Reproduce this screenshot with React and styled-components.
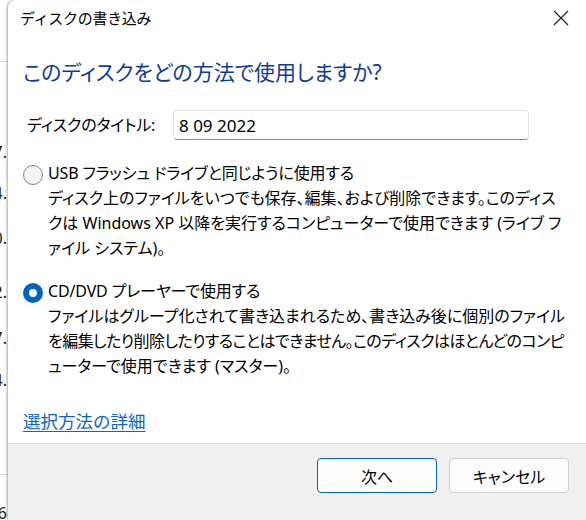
import React from "react";
import styled, { createGlobalStyle } from "styled-components";

const Global = createGlobalStyle`
  html, body { margin: 0; padding: 0; background: #ffffff; }
  body {
    font-family: "Noto Sans", "Noto Sans CJK JP", sans-serif;
    color: #000;
    -webkit-font-smoothing: antialiased;
  }
  #root { width: 586px; height: 520px; overflow: hidden; }
`;

const Screen = styled.div`
  display: flex;
  width: 586px;
  height: 520px;
  overflow: hidden;
  background: #ffffff;
`;

const BackStrip = styled.div`
  width: 8px;
  flex: none;
  display: flex;
  flex-direction: column;
  overflow: hidden;
  background: #ffffff;
`;

const BackLine = styled.div`
  flex: none;
  height: 1px;
  width: 100%;
  margin-top: ${(p) => p.$top}px;
  background: #d6d6d6;
`;

const BackDigit = styled.div`
  flex: none;
  height: 20px;
  margin-top: ${(p) => p.$top}px;
  display: flex;
  justify-content: flex-end;
  align-items: center;
  white-space: nowrap;
  font-family: "Noto Sans", sans-serif;
  font-size: 16px;
  line-height: 20px;
  color: #1a1a1a;
  padding-right: 1px;
`;

const Dialog = styled.div`
  position: relative;
  flex: 1;
  min-width: 0;
  display: flex;
  flex-direction: column;
  background: #ffffff;
  border-top-left-radius: 8px;
  box-shadow: -1px 0 3px rgba(0, 0, 0, 0.35);
`;

const TitleBar = styled.div`
  height: 36px;
  flex: none;
  display: flex;
  align-items: center;
  justify-content: space-between;
  padding-left: 12px;
`;

const TitleText = styled.div`
  font-family: "Noto Sans CJK JP", sans-serif;
  font-size: 15px;
  letter-spacing: -0.3px;
  line-height: 20px;
  color: #000;
`;

const CloseButton = styled.div`
  width: 46px;
  height: 36px;
  margin-right: 2px;
  display: flex;
  align-items: center;
  justify-content: center;
`;

const Content = styled.div`
  flex: 1;
  display: flex;
  flex-direction: column;
  padding: 0 15px;
`;

const Heading = styled.div`
  margin-top: 22px;
  font-family: "Noto Sans", "Noto Sans CJK JP", sans-serif;
  font-feature-settings: "palt";
  font-size: 21px;
  line-height: 28px;
  color: #0f3aa0;
  white-space: nowrap;
`;

const TitleRow = styled.div`
  margin-top: 24px;
  height: 30px;
  display: flex;
  align-items: center;
  padding-left: 4px;
`;

const FieldLabel = styled.div`
  width: 146px;
  flex: none;
  font-feature-settings: "palt";
  font-size: 16px;
  letter-spacing: -0.2px;
  line-height: 25px;
  white-space: nowrap;
`;

const TextBox = styled.div`
  box-sizing: border-box;
  width: 356px;
  height: 30px;
  border: 1px solid #e3e3e3;
  border-bottom-color: #8a8a8a;
  border-radius: 4px;
  padding: 0 5px;
  display: flex;
  align-items: center;
  font-size: 17px;
  background: #fff;
`;

const Option = styled.div`
  margin-top: ${(p) => p.$top}px;
  display: grid;
  grid-template-columns: 20px 1fr;
  column-gap: 5px;
  line-height: 25px;
  font-size: 16px;
  font-feature-settings: "palt";
`;

const RadioCell = styled.div`
  height: 25px;
  display: flex;
  align-items: center;
  padding-top: 2px;
  box-sizing: border-box;
`;

const Radio = styled.div`
  box-sizing: border-box;
  width: 20px;
  height: 20px;
  border-radius: 50%;
  ${(p) =>
    p.$checked
      ? `background: #ffffff; border: 6px solid #0063be;`
      : `background: #f3f3f3; border: 1px solid #858585;`}
`;

const OptionTitle = styled.div`
  white-space: nowrap;
  letter-spacing: -0.15px;
`;

const OptionDesc = styled.div`
  grid-column: 2;
  display: flex;
  flex-direction: column;
`;

const DescLine = styled.div`
  white-space: nowrap;
  letter-spacing: ${(p) => p.$ls || 0}px;
`;

const HelpLink = styled.a`
  margin-top: 30px;
  align-self: flex-start;
  font-size: 17.5px;
  line-height: 25px;
  color: #0a66c8;
  text-decoration: underline;
  text-underline-offset: 3px;
  cursor: pointer;
`;

const Footer = styled.div`
  flex: none;
  height: 62px;
  border-top: 1px solid #dedede;
  background: #f0f0f0;
  display: flex;
  justify-content: flex-end;
  align-items: flex-start;
  gap: 12px;
  padding: 14px 17px 0 0;
`;

const Button = styled.div`
  box-sizing: border-box;
  width: 120px;
  height: 35px;
  border-radius: 4px;
  background: #fdfdfd;
  border: 1px solid ${(p) => (p.$primary ? "#0067c0" : "#d0d0d0")};
  display: flex;
  align-items: center;
  justify-content: center;
  font-size: 16px;
  font-feature-settings: "palt";
  color: #000;
`;

const backDigits = [
  { t: "17.", top: 80 },
  { t: "14.", top: 21 },
  { t: "10.", top: 25 },
  { t: "12.", top: 34 },
  { t: "17.", top: 26 },
  { t: "14.", top: 22 },
];

export default function App() {
  return (
    <>
      <Global />
      <Screen>
        <BackStrip>
          <BackLine $top={61} />
          {backDigits.map((d, i) => (
            <BackDigit key={i} $top={d.top}>
              {d.t}
            </BackDigit>
          ))}
          <BackLine $top={84} />
          <BackDigit $top={28}>6</BackDigit>
        </BackStrip>
        <Dialog>
          <TitleBar>
            <TitleText>ディスクの書き込み</TitleText>
            <CloseButton>
              <svg width="16" height="16" viewBox="0 0 16 16">
                <path d="M1 1 L15 15 M15 1 L1 15" stroke="#1a1a1a" strokeWidth="1.1" fill="none" />
              </svg>
            </CloseButton>
          </TitleBar>
          <Content>
            <Heading>このディスクをどの方法で使用しますか?</Heading>
            <TitleRow>
              <FieldLabel>ディスクのタイトル:</FieldLabel>
              <TextBox>8 09 2022</TextBox>
            </TitleRow>
            <Option $top={21}>
              <RadioCell>
                <Radio />
              </RadioCell>
              <OptionTitle>USB フラッシュ ドライブと同じように使用する</OptionTitle>
              <OptionDesc>
                <DescLine>ディスク上のファイルをいつでも保存、編集、および削除できます。このディス</DescLine>
                <DescLine>クは Windows XP 以降を実行するコンピューターで使用できます (ライブ フ</DescLine>
                <DescLine>ァイル システム)。</DescLine>
              </OptionDesc>
            </Option>
            <Option $top={18}>
              <RadioCell>
                <Radio $checked />
              </RadioCell>
              <OptionTitle>CD/DVD プレーヤーで使用する</OptionTitle>
              <OptionDesc>
                <DescLine>ファイルはグループ化されて書き込まれるため、書き込み後に個別のファイル</DescLine>
                <DescLine $ls={-0.55}>を編集したり削除したりすることはできません。このディスクはほとんどのコンピ</DescLine>
                <DescLine>ューターで使用できます (マスター)。</DescLine>
              </OptionDesc>
            </Option>
            <HelpLink>選択方法の詳細</HelpLink>
          </Content>
          <Footer>
            <Button $primary>次へ</Button>
            <Button>キャンセル</Button>
          </Footer>
        </Dialog>
      </Screen>
    </>
  );
}
